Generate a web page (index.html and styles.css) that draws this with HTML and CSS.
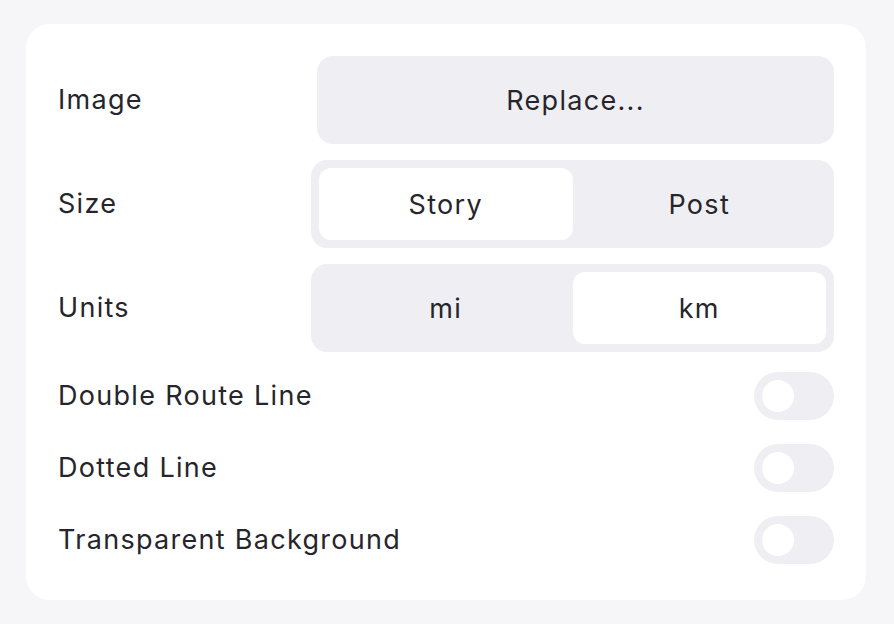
FILE: index.html
```html
<!DOCTYPE html>
<html lang="en">
<head>
<meta charset="utf-8">
<title>Settings</title>
<link rel="stylesheet" href="styles.css">
</head>
<body>
<div class="card">
  <div class="row">
    <div class="label">Image</div>
    <div class="control"><button class="btn">Replace...</button></div>
  </div>
  <div class="row">
    <div class="label">Size</div>
    <div class="control">
      <div class="seg">
        <div class="seg-item active">Story</div>
        <div class="seg-item">Post</div>
      </div>
    </div>
  </div>
  <div class="row">
    <div class="label">Units</div>
    <div class="control">
      <div class="seg">
        <div class="seg-item">mi</div>
        <div class="seg-item active">km</div>
      </div>
    </div>
  </div>
  <div class="trow">
    <div class="label">Double Route Line</div>
    <div class="toggle"><span class="knob"></span></div>
  </div>
  <div class="trow">
    <div class="label">Dotted Line</div>
    <div class="toggle"><span class="knob"></span></div>
  </div>
  <div class="trow">
    <div class="label">Transparent Background</div>
    <div class="toggle"><span class="knob"></span></div>
  </div>
</div>
</body>
</html>
```
FILE: styles.css
```css
html, body {
  margin: 0;
  padding: 0;
}
body {
  background: #f6f6f8;
  padding: 24px 28px 24px 26px;
  font-family: "Inter", "Open Sans", sans-serif;
  color: #26252c;
}
.card {
  width: 840px;
  height: 576px;
  box-sizing: border-box;
  background: #ffffff;
  border-radius: 24px;
  padding: 32px;
  display: flex;
  flex-direction: column;
  gap: 16px;
}
.row {
  display: grid;
  grid-template-columns: 253px 523px;
  height: 88px;
  align-items: center;
}
.label {
  font-size: 27px;
  line-height: 32px;
  letter-spacing: 1.3px;
}
.control {
  height: 88px;
  display: flex;
  justify-content: flex-end;
}
.btn {
  width: 517px;
  height: 88px;
  border: none;
  border-radius: 16px;
  background: #efeef3;
  font-family: inherit;
  font-size: 27px;
  letter-spacing: 1.3px;
  color: #26252c;
  padding: 0;
}
.seg {
  width: 523px;
  height: 88px;
  box-sizing: border-box;
  padding: 8px;
  background: #efeef3;
  border-radius: 16px;
  display: grid;
  grid-template-columns: 1fr 1fr;
}
.seg-item {
  display: flex;
  align-items: center;
  justify-content: center;
  font-size: 27px;
  letter-spacing: 1.3px;
  border-radius: 12px;
}
.seg-item.active {
  background: #ffffff;
}
.trow {
  height: 56px;
  display: flex;
  align-items: center;
  justify-content: space-between;
}
.toggle {
  width: 80px;
  height: 48px;
  border-radius: 24px;
  background: #efeef3;
  box-sizing: border-box;
  padding: 8px;
  display: flex;
  align-items: center;
}
.knob {
  width: 32px;
  height: 32px;
  border-radius: 50%;
  background: #ffffff;
}
```
